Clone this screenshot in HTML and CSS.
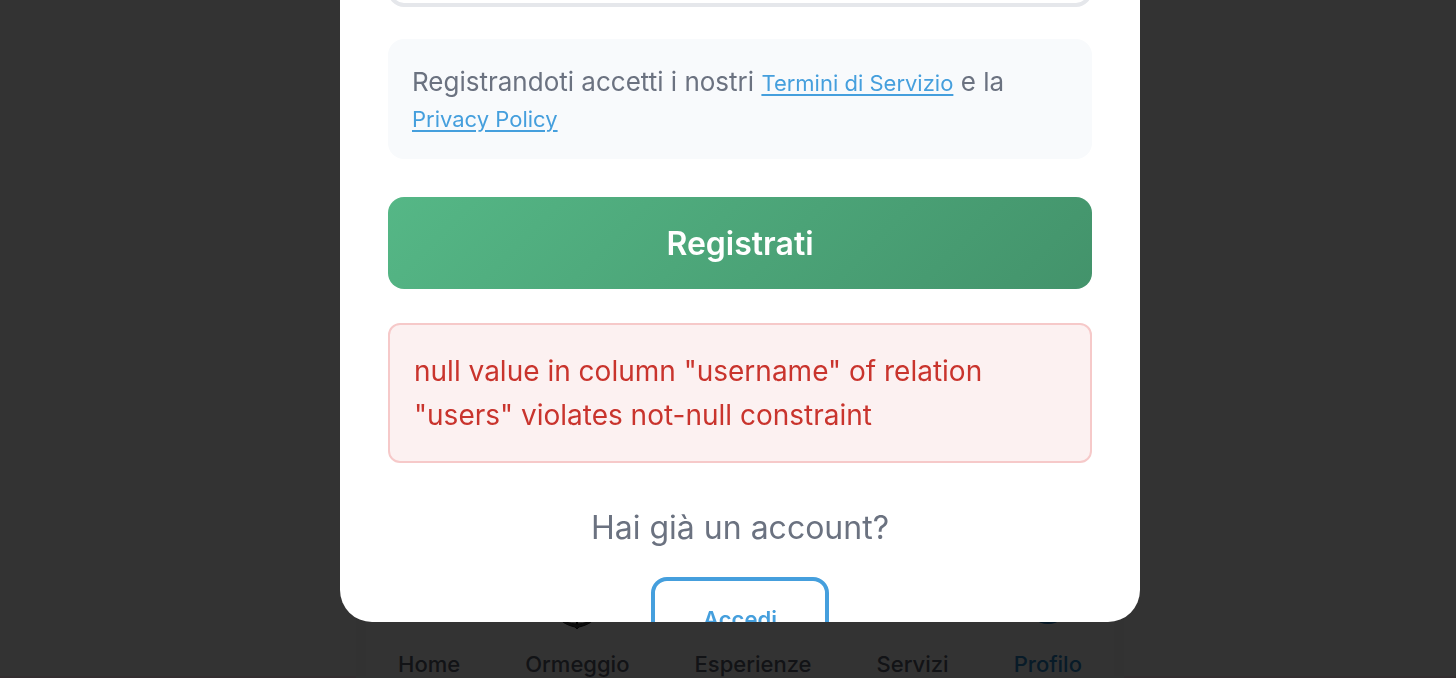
FILE: index.html
```html
<!DOCTYPE html>
<html lang="it">
<head>
<meta charset="utf-8">
<meta name="viewport" content="width=device-width, initial-scale=1">
<title>Registrazione</title>
<link rel="stylesheet" href="styles.css">
</head>
<body>
<div class="page">
  <nav class="tabbar">
    <a class="tab" href="#"><svg class="tab-icon" viewBox="0 0 40 40" aria-hidden="true"><path d="M6 16 20 4l14 12v14H6z"/></svg>Home</a>
    <a class="tab" href="#"><svg class="tab-icon" viewBox="0 0 40 40" aria-hidden="true"><circle cx="20" cy="6" r="4"/><path d="M20 10v28"/><path class="fluke" d="M1 26c2 5 8 9 17 11l2 2 2-2c9-2 15-6 17-11-5 5-11 8-19 8S6 31 1 26z"/></svg>Ormeggio</a>
    <a class="tab" href="#"><svg class="tab-icon" viewBox="0 0 40 40" aria-hidden="true"><circle cx="20" cy="16" r="14"/></svg>Esperienze</a>
    <a class="tab" href="#"><svg class="tab-icon" viewBox="0 0 40 40" aria-hidden="true"><path d="M6 6h28v24H6z"/></svg>Servizi</a>
    <a class="tab tab-active" href="#"><svg class="tab-icon" viewBox="0 0 40 40" aria-hidden="true"><ellipse class="solid" cx="20" cy="16" rx="20" ry="18"/></svg>Profilo</a>
  </nav>
</div>
<div class="overlay">
  <form class="modal">
    <input class="field" type="password" aria-label="Conferma password">
    <p class="terms">Registrandoti accetti i nostri <a class="link" href="#">Termini di Servizio</a> e la <a class="link" href="#">Privacy Policy</a></p>
    <button class="submit" type="submit">Registrati</button>
    <p class="error" role="alert">null value in column "username" of relation "users" violates not-null constraint</p>
    <p class="question">Hai già un account?</p>
    <button class="login" type="button">Accedi</button>
  </form>
</div>
</body>
</html>
```
FILE: styles.css
```css
* { box-sizing: border-box; }

body {
  margin: 0;
  overflow: hidden;
  font-family: Inter, "Liberation Sans", sans-serif;
  background: #fff;
}

.page {
  min-height: 100vh;
  padding-left: 24px;
  display: flex;
  flex-direction: column;
  justify-content: flex-end;
  align-items: center;
  border-bottom: 2px solid #ffe4ee;
}

.tabbar {
  width: 100%;
  max-width: 748px;
  display: flex;
  justify-content: space-between;
  padding: 16px 32px 0;
  box-shadow: 0 0 0 10px #f8f8f8;
}

.tab {
  display: flex;
  flex-direction: column;
  align-items: center;
  gap: 22px;
  color: #5b616d;
  font-size: 22px;
  line-height: 24px;
  font-weight: 500;
  text-decoration: none;
}

.tab-active { color: #2a86c8; }

.tab-icon {
  width: 40px;
  height: 40px;
  fill: none;
  stroke: #000;
  stroke-width: 2;
}

.tab-icon .solid { fill: #1772b8; stroke: none; }

.tab-icon .fluke { fill: #444; stroke: #222; stroke-width: 1; }

.overlay {
  position: fixed;
  inset: 0;
  padding: 0 0 56px 24px;
  display: flex;
  justify-content: center;
  background: rgba(0, 0, 0, 0.8);
}

.modal {
  width: 100%;
  max-width: 800px;
  display: flex;
  flex-direction: column;
  padding: 0 48px;
  overflow: hidden;
  background: #fff;
  border-radius: 0 0 32px 32px;
}

.modal > * { flex-shrink: 0; }

.field {
  height: 92px;
  margin: -85px 0 32px;
  padding: 0 24px;
  border: 4px solid #e5e7eb;
  border-radius: 16px;
  background: #fff;
  font: inherit;
}

.terms {
  margin: 0 0 38px;
  padding: 25px 24px 23px;
  border-radius: 16px;
  background: #f8fafc;
  color: #6b7280;
  font-size: 26px;
  line-height: 36px;
}

.link {
  color: #459fdd;
  font-size: 22px;
  line-height: 24px;
  text-decoration: underline;
  text-decoration-thickness: 2px;
  text-underline-offset: 3px;
}

.submit {
  height: 92px;
  margin: 0 0 34px;
  padding: 2px 0 0;
  border: 0;
  border-radius: 16px;
  background: linear-gradient(135deg, #55b786, #43936b);
  color: #fff;
  font: 600 32px/40px Inter, "Liberation Sans", sans-serif;
}

.error {
  margin: 0 0 40px;
  padding: 24px;
  border: 2px solid #f6c9c9;
  border-radius: 12px;
  background: #fcf1f1;
  color: #c9342d;
  font-size: 28px;
  line-height: 44px;
}

.question {
  margin: 0 0 24px;
  color: #6b7280;
  font-size: 32px;
  line-height: 50px;
  text-align: center;
}

.login {
  align-self: center;
  height: 84px;
  padding: 0 48px;
  border: 4px solid #459fdd;
  border-radius: 16px;
  background: #fff;
  color: #459fdd;
  font: 600 22px/28px Inter, "Liberation Sans", sans-serif;
}
```
